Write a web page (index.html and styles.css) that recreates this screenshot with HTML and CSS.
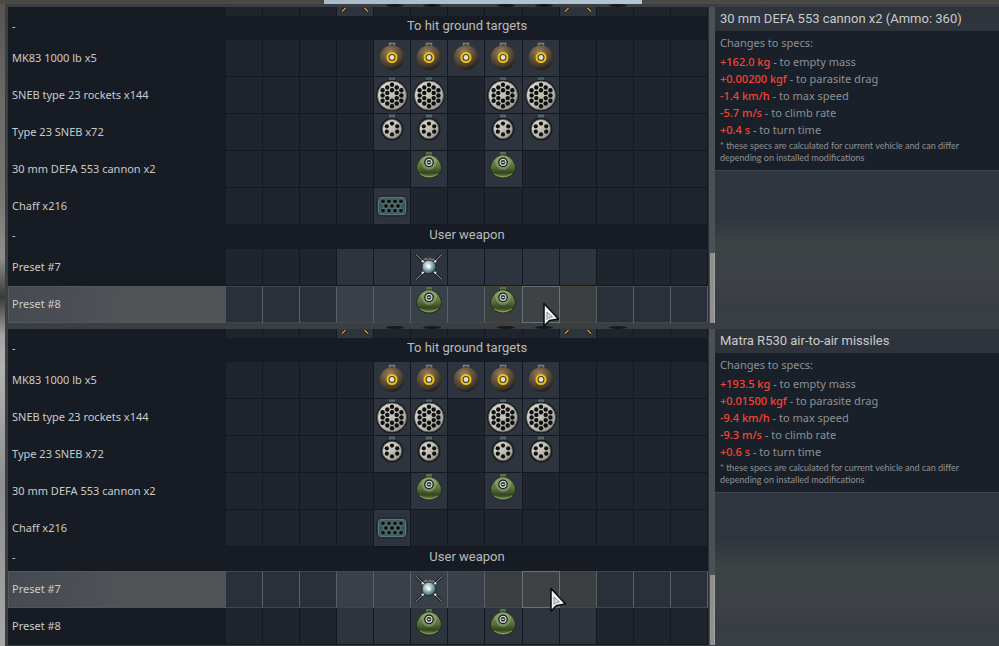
FILE: index.html
```
<!DOCTYPE html>
<html lang="en">

<head>
    <meta charset="UTF-8">
    <title>Weapon presets</title>
    <link rel="stylesheet" href="styles.css">
</head>

<body>
    <svg class="sprite" aria-hidden="true">
        <defs>
            <radialGradient id="g-bomb" cx="42%" cy="30%" r="70%">
                <stop offset="0" stop-color="#9c8665" />
                <stop offset="0.4" stop-color="#705c41" />
                <stop offset="0.8" stop-color="#44392a" />
                <stop offset="1" stop-color="#211e1a" />
            </radialGradient>
            <linearGradient id="g-pod" x1="0" y1="0" x2="1" y2="1">
                <stop offset="0" stop-color="#dedcd2" />
                <stop offset="0.5" stop-color="#c3c1b6" />
                <stop offset="1" stop-color="#8c8a81" />
            </linearGradient>
            <linearGradient id="g-gun" x1="0" y1="0" x2="0" y2="1">
                <stop offset="0" stop-color="#7f965f" />
                <stop offset="0.5" stop-color="#5a7240" />
                <stop offset="0.78" stop-color="#33451f" />
                <stop offset="1" stop-color="#76914f" />
            </linearGradient>
            <radialGradient id="g-missile" cx="42%" cy="38%" r="62%">
                <stop offset="0" stop-color="#f4fbfb" />
                <stop offset="0.4" stop-color="#a9c3c7" />
                <stop offset="0.8" stop-color="#5c7b82" />
                <stop offset="1" stop-color="#253239" />
            </radialGradient>
        </defs>

        <symbol id="bomb" viewBox="0 0 36 36">
            <path d="M15.500 5.500V3.500h5v2" fill="none" stroke="#7d8285" stroke-width="1.500" />
            <circle cx="18" cy="17.500" r="12.200" fill="url(#g-bomb)" />
            <circle cx="18" cy="17.500" r="4.500" fill="#4d3b10" stroke="#f0c40f" stroke-width="2" />
            <circle cx="18" cy="17.500" r="2.400" fill="#dedfe0" />
        </symbol>

        <symbol id="pod" viewBox="0 0 36 36">
            <path d="M15 0.500h6v4h-6z" fill="#4d6670" />
            <circle cx="18" cy="18.500" r="15.800" fill="#14171a" />
            <circle cx="18" cy="18.500" r="14.600" fill="url(#g-pod)" stroke="#4a4a46" stroke-width="0.800" />
            <g fill="#0d0f10">
                <circle cx="18" cy="7.800" r="2.200" /><circle cx="18" cy="13.200" r="2.200" />
                <circle cx="18" cy="23.800" r="2.200" /><circle cx="18" cy="29.200" r="2.200" />
                <circle cx="13.300" cy="10.500" r="2.200" /><circle cx="22.700" cy="10.500" r="2.200" />
                <circle cx="13.300" cy="15.900" r="2.200" /><circle cx="22.700" cy="15.900" r="2.200" />
                <circle cx="13.300" cy="21.100" r="2.200" /><circle cx="22.700" cy="21.100" r="2.200" />
                <circle cx="13.300" cy="26.500" r="2.200" /><circle cx="22.700" cy="26.500" r="2.200" />
                <circle cx="8.600" cy="13.200" r="2.200" /><circle cx="27.400" cy="13.200" r="2.200" />
                <circle cx="8.600" cy="18.500" r="2.200" /><circle cx="27.400" cy="18.500" r="2.200" />
                <circle cx="8.600" cy="23.800" r="2.200" /><circle cx="27.400" cy="23.800" r="2.200" />
            </g>
        </symbol>

        <symbol id="pod-small" viewBox="0 0 36 36">
            <path d="M15 0.500h6v4h-6z" fill="#4d6670" />
            <circle cx="18" cy="15" r="11.500" fill="#1b1c1c" />
            <circle cx="18" cy="15" r="9.600" fill="url(#g-pod)" stroke="#65645e" stroke-width="0.800" />
            <g fill="#0d0f10">
                <circle cx="18" cy="9.600" r="2.100" /><circle cx="18" cy="20.400" r="2.100" />
                <circle cx="12.800" cy="12.300" r="2.100" /><circle cx="23.200" cy="12.300" r="2.100" />
                <circle cx="12.800" cy="17.700" r="2.100" /><circle cx="23.200" cy="17.700" r="2.100" />
            </g>
        </symbol>

        <symbol id="gun" viewBox="0 0 36 36">
            <path d="M15 1h6v4h-6z" fill="#58724a" />
            <path d="M18 3.800C24.500 3.800 30.500 10.500 30.500 17C30.500 22.500 25 27 18 27S5.500 22.500 5.500 17C5.500 10.500 11.500 3.800 18 3.800z" fill="url(#g-gun)" stroke="#232d1b" />
            <path d="M9.500 9.500Q12 19 18 19T26.500 9.500Q22.500 4.500 18 4.500T9.500 9.500z" fill="#a8bd8c" opacity="0.400" />
            <path d="M9 22.800Q18 28.500 27 22.800" fill="none" stroke="#9fb974" opacity="0.600" />
            <circle cx="18" cy="11.300" r="4.800" fill="#15181a" />
            <circle cx="18" cy="11.300" r="3" fill="#272b2c" stroke="#d5d9d5" stroke-width="1.200" />
            <path d="M16.500 11.300h3" stroke="#eef0ee" />
        </symbol>

        <symbol id="chaff" viewBox="0 0 36 36">
            <path d="M6 8h24q2 0 2.500 2l1 5v5.500l-1 5.500q-0.500 2-2.500 2H6q-2 0-2.500-2l-1-5.500v-5.500l1-5q0.500-2 2.500-2z" fill="#2d3a40" stroke="#1d2428" />
            <path d="M6.500 9.500h23q1.500 0 2 2v13q-0.500 2-2 2h-23q-1.500 0-2-2v-13q0.500-2 2-2z" fill="#3b545a" stroke="#62818a" stroke-width="0.800" />
            <g fill="#0a0d0e" stroke="#7aa69f" stroke-width="0.600">
                <circle cx="9" cy="13.300" r="2.400" /><circle cx="15" cy="13.300" r="2.400" /><circle cx="21" cy="13.300" r="2.400" /><circle cx="27" cy="13.300" r="2.400" />
                <circle cx="12" cy="18" r="2.400" /><circle cx="18" cy="18" r="2.400" /><circle cx="24" cy="18" r="2.400" />
                <circle cx="9" cy="22.700" r="2.400" /><circle cx="15" cy="22.700" r="2.400" /><circle cx="21" cy="22.700" r="2.400" /><circle cx="27" cy="22.700" r="2.400" />
            </g>
        </symbol>

        <symbol id="missile" viewBox="0 0 36 36">
            <path d="M5 5.500L31 30.500M31 5.500L5 30.500" stroke="#14181b" stroke-width="2.500" />
            <path d="M5 5.500L31 30.500M31 5.500L5 30.500" stroke="#a9afb0" />
            <path d="M11 11.500l3 3M25 11.500l-3 3M11 24.500l3-3M25 24.500l-3-3" stroke="#dfe3e3" stroke-width="2" />
            <path d="M13 11l2-1.500 2 1.500 2-1.500 2 1.500 2-1" fill="none" stroke="#8d7d74" stroke-width="1.500" />
            <circle cx="18" cy="18" r="7" fill="url(#g-missile)" stroke="#1d272c" stroke-width="0.800" />
            <circle cx="18" cy="18" r="1.800" fill="#fff" opacity="0.800" />
        </symbol>

        <symbol id="fins" viewBox="0 0 36 9">
            <path d="M5 4.500l3.500-3.500M31 4.500l-3.500-3.500" stroke="#11151a" stroke-width="3" />
            <path d="M5 4.500l3.500-3.500M31 4.500l-3.500-3.500" stroke="#d39a23" stroke-width="1.500" />
        </symbol>

        <symbol id="cursor" viewBox="0 0 18 27">
            <path d="M2 1.500v22.500l5.500-5.500 9-1.500z" fill="#f4f4f4" stroke="#0b0c0d" stroke-width="1.500" stroke-linejoin="round" />
            <path d="M5 10v7.500l2-2 3.500-0.500z" fill="#dcdcdc" stroke="#77797a" stroke-width="0.800" />
        </symbol>
    </svg>

    <main class="screen">
        <section class="panel">
            <table class="presets" data-selected="8"></table>
            <div class="scroll"><div class="thumb"></div></div>
            <aside class="info">
                <h2>30 mm DEFA 553 cannon x2 (Ammo: 360)</h2>
                <div class="specs">
                    <h3>Changes to specs:</h3>
                    <ul>
                        <li><b>+162.0 kg</b> - to empty mass</li>
                        <li><b>+0.00200 kgf</b> - to parasite drag</li>
                        <li><b>-1.4 km/h</b> - to max speed</li>
                        <li><b>-5.7 m/s</b> - to climb rate</li>
                        <li><b>+0.4 s</b> - to turn time</li>
                    </ul>
                    <p>* these specs are calculated for current vehicle and can differ depending on installed modifications</p>
                </div>
            </aside>
        </section>

        <section class="panel">
            <table class="presets" data-selected="7"></table>
            <div class="scroll"><div class="thumb"></div></div>
            <aside class="info">
                <h2>Matra R530 air-to-air missiles</h2>
                <div class="specs">
                    <h3>Changes to specs:</h3>
                    <ul>
                        <li><b>+193.5 kg</b> - to empty mass</li>
                        <li><b>+0.01500 kgf</b> - to parasite drag</li>
                        <li><b>-9.4 km/h</b> - to max speed</li>
                        <li><b>-9.3 m/s</b> - to climb rate</li>
                        <li><b>+0.6 s</b> - to turn time</li>
                    </ul>
                    <p>* these specs are calculated for current vehicle and can differ depending on installed modifications</p>
                </div>
            </aside>
        </section>
    </main>

    <script src="script.js"></script>
</body>

</html>
```

FILE: styles.css
```
* {
    box-sizing: border-box;
}

body {
    margin: 0;
    background: #3a3f46;
    color: #c9cbca;
    font: 11px/16px "Noto Sans", sans-serif;
}

.sprite {
    position: absolute;
    width: 0;
    height: 0;
}

.screen {
    min-height: 100vh;
    padding: 7px 0 1px 8px;
    background:
        linear-gradient(90deg, transparent 324px, #a9bccd 324px, #b4c6d6 642px, transparent 642px) 0 0 / 100% 4px no-repeat,
        linear-gradient(#484742, #4d4c48) 0 0 / 100% 4px no-repeat,
        linear-gradient(90deg, transparent 5px, #3a3f46 5px) 0 0 / 8px 100% no-repeat,
        linear-gradient(#55534f, #6a6966 15%, #77756f 30%, #8e8e8b 40%, #3a3a3a 46%, #a3a4a3 52%, #b2b3b1 57%, #8d8f8e 75%, #a7a8a6) 0 0 / 5px 100% no-repeat,
        #3a3f46;
}

.panel {
    display: grid;
    grid-template-columns: minmax(0, 1fr) 7px 284px;
}

.panel + .panel {
    margin-top: 6px;
}

/* preset table */

.presets {
    width: 100%;
    table-layout: fixed;
    border-collapse: separate;
    border-spacing: 0;
    background: #171b23;
}

.presets .name-col {
    width: 218px;
}

.presets tr {
    height: 37px;
}

.presets .clipped {
    height: 9px;
}

.presets .group {
    height: 24px;
}

.presets th,
.presets td {
    padding: 0;
    font-weight: normal;
    text-align: left;
}

.presets th {
    padding: 0 0 2px 4px;
}

.presets .clipped th {
    padding-bottom: 0;
}

.presets .group th {
    padding-bottom: 4px;
}

.presets .title {
    padding-left: 0;
    color: #b9bbba;
    font: 13px/20px Roboto, sans-serif;
    text-align: center;
}

.cell {
    position: relative;
    background: #20242d;
    border-right: 1px solid #141820;
    border-bottom: 1px solid #141820;
}

.clipped .cell {
    border-bottom: 0;
}

.cell.used {
    background: #2e343e;
}

.cell svg {
    display: block;
    width: 36px;
    height: 36px;
}

.clipped .cell svg {
    height: 9px;
}

.clipped .dark::before {
    content: "";
    position: absolute;
    top: -3px;
    left: 12px;
    width: 18px;
    height: 3px;
    border-radius: 50%;
    background: #14181e;
}

.presets .selected th {
    background: linear-gradient(100deg, #454951, #505457 55%, #505457);
    border: 1px solid #53575a;
    border-right: 0;
    padding-left: 3px;
}

.selected .cell {
    background: #293039;
    border-top: 1px solid #41464c;
    border-right-color: #5b6064;
    border-bottom-color: #41464c;
}

.selected .cell.used {
    background: #394047;
}

.selected .cell svg {
    margin-top: -1px;
}

.selected .cell.warm {
    background: #3b3f42;
    border-top-color: #4c4639;
    border-bottom-color: #4c4639;
}

.selected .cell.hover {
    background: #3e4244;
    border-color: #65747b;
    box-shadow: -1px 0 #65747b;
}

.selected .cell .cursor {
    position: absolute;
    z-index: 1;
    top: 15px;
    left: 19px;
    width: 18px;
    height: 27px;
    margin: 0;
}

[data-selected="7"] .cell .cursor {
    left: 26px;
}

/* scroll bar */

.scroll {
    display: flex;
    flex-direction: column;
    justify-content: flex-end;
    padding-left: 1px;
    background: #4c5155;
    border-left: 1px solid #2c3138;
}

.thumb {
    height: 22%;
    background: #909090;
    border-right: 1px solid #a3a3a3;
}

/* info column */

.info {
    background: linear-gradient(#2f353e 0, #2f353e 66%, #3d4245 75%, #3e4247 86%, #383d44 95%, #3a3f43);
}

.info h2 {
    margin: 0;
    padding: 0 5px;
    background: #2e333c;
    font: 13px/24px Roboto, sans-serif;
}

.specs {
    padding: 4px 5px;
    background: #19202a;
    border-bottom: 1px solid #3f464e;
    color: #8e9192;
}

.specs h3 {
    margin: 0 0 2px;
    font-size: 11px;
    font-weight: normal;
}

.specs ul {
    margin: 0;
    padding: 0;
    list-style: none;
    line-height: 17px;
}

.specs b {
    color: #f9432f;
    font-weight: 500;
}

.specs p {
    margin: 2px 0;
    font: 9px/12px Lato, sans-serif;
}
```

FILE: script.js
```
const COLUMNS = 13;

// icons: column number -> symbol id
const rows = [
    { type: 'clipped', icons: { 3: 'fins', 9: 'fins' }, dark: [4, 5, 7, 8, 10] },
    { type: 'group', title: 'To hit ground targets' },
    { name: 'MK83 1000 lb x5', icons: { 4: 'bomb', 5: 'bomb', 6: 'bomb', 7: 'bomb', 8: 'bomb' } },
    { name: 'SNEB type 23 rockets x144', icons: { 4: 'pod', 5: 'pod', 7: 'pod', 8: 'pod' } },
    { name: 'Type 23 SNEB x72', icons: { 4: 'pod-small', 5: 'pod-small', 7: 'pod-small', 8: 'pod-small' } },
    { name: '30 mm DEFA 553 cannon x2', icons: { 5: 'gun', 7: 'gun' } },
    { name: 'Chaff x216', icons: { 4: 'chaff' } },
    { type: 'group', title: 'User weapon' },
    { name: 'Preset #7', preset: '7', icons: { 5: 'missile' } },
    { name: 'Preset #8', preset: '8', icons: { 5: 'gun', 7: 'gun' } }
];

function icon(id, cls) {
    return `<svg class="${cls || ''}"><use href="#${id}"/></svg>`;
}

function cell(row, col, selected) {
    let cls = 'cell';
    let content = row.icons[col] ? icon(row.icons[col]) : '';
    if (content || (row.preset && col >= 3 && col <= 9)) cls += ' used';
    if (row.dark && row.dark.includes(col)) cls += ' dark';
    if (selected && (col == 7 || col == 9)) cls += ' warm';
    if (selected && col == 8) {
        cls += ' hover';
        content += icon('cursor', 'cursor');
    }
    return `<td class="${cls}">${content}</td>`;
}

function buildTable(table) {
    let html = '<colgroup><col class="name-col"><col span="13"></colgroup>';
    rows.forEach(row => {
        if (row.type == 'group') {
            html += `<tr class="group"><th>-</th><th class="title" colspan="${COLUMNS}">${row.title}</th></tr>`;
            return;
        }
        const selected = row.preset && row.preset == table.dataset.selected;
        html += `<tr class="${row.type || ''}${selected ? 'selected' : ''}"><th scope="row">${row.name || ''}</th>`;
        for (let col = 0; col < COLUMNS; col++) {
            html += cell(row, col, selected);
        }
        html += '</tr>';
    });
    table.innerHTML = html;
}

document.querySelectorAll('.presets').forEach(buildTable);
```
